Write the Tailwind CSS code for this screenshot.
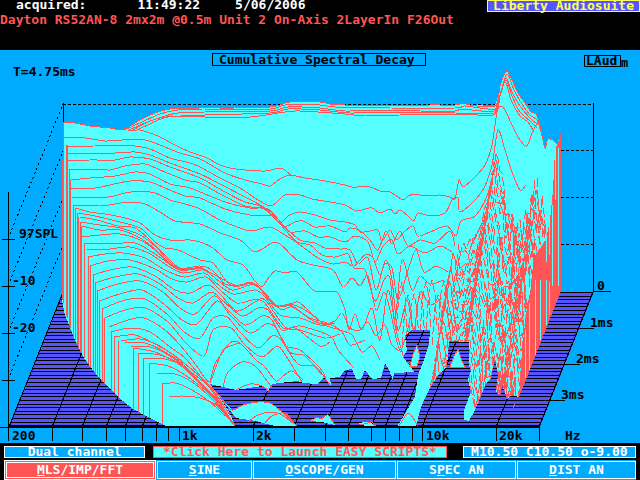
<!DOCTYPE html>
<html lang="en">
<head>
    <meta charset="UTF-8">
    <meta name="viewport" content="width=device-width, initial-scale=1.0">
    <title>Liberty Audiosuite - Cumulative Spectral Decay</title>
    <script src="https://cdn.jsdelivr.net/npm/@tailwindcss/browser@4"></script>
</head>
<body class="bg-black text-white font-['DejaVu_Sans_Mono',monospace] font-bold text-[13px] overflow-x-hidden">

    <header class="pb-[22px]">
        <div class="flex items-start justify-between">
            <div class="flex gap-[35px] pl-4 leading-[10px] whitespace-nowrap">
                <span class="pr-4">acquired:</span>
                <span>11:49:22</span>
                <span>5/06/2006</span>
            </div>
            <h1 class="border border-[#ffff55] bg-[#5555ff] text-[#ffff55] px-[5px] h-3 leading-[10px]">Liberty Audiosuite</h1>
        </div>
        <p class="text-[#ff5555] leading-4 whitespace-nowrap">Dayton RS52AN-8 2mx2m @0.5m Unit 2 On-Axis 2LayerIn F26Out</p>
    </header>

    <main>
        <svg class="block w-full bg-[#00aaff]" viewBox="0 50 640 393" shape-rendering="crispEdges" fill="none">
            <defs>
                <clipPath id="bodyClip"><use href="#body"/></clipPath>
            </defs>

            <!-- floor -->
            <polygon points="9,427 62,293 594,292 540,427" fill="#5555ff"/>
            <g id="floor" stroke="#000"></g>

            <!-- back walls -->
            <g stroke="#000">
                <path d="M63 103V160M593 103V292L539 427M8 192V441M0 427H540"/>
                <path d="M2 239H15M2 286H15M2 333H15M2 380H15"/>
                <path d="M593 291H611M578 328H594M563 364H580M549 400H565"/>
                <path stroke-dasharray="2 3" d="M8 239L63 104M8 286L63 151M8 333L63 198M8 380L63 245"/>
                <path stroke-dasharray="3 2" d="M63 104H593M561 150H593M561 197H593M561 244H593"/>
            </g>

            <!-- decay surface -->
            <path id="body" fill="#55ffff" d="M63 122L75 123L90 126L110 128L120 130L127 128L140 120L155 113L170 109L200 108L270 107L283 104L290 102H320L330 104L345 105L390 106L455 105L463 103L470 105L495 106L498 96L500 86L504 75L507 71L512 80L518 93L525 103L531 112L536 114L540 126L545 148L547 139L553 140L557 144L561 134V291L519 397L512 395L507 399L505 392L502 385L500 396L496 392L498 375L495 358L491 378L486 383L480 398L475 410L469 421L464 420L464 410L471 392L468 380L471 370L469 366V342L449 341L447 366L438 375L430 388L424 400L420 410L416 427L397 427L406 412L415 397L418 375L424 360L429 345L430 330L412 330L405 336L407 350L403 357L410 366L414 372L394 373L393 380L389 370L385 363L381 378L372 379L365 370L361 379H356L352 369L345 370L340 377L330 378L331 386L325 377L317 384L303 383L297 381L272 384L268 391L262 386L236 390L223 387L210 384L220 398L228 410L236 427H168L150 418L133 409L118 397L105 384L95 373L84 358L75 340L65 315L62 300Z"/>
            <path fill="#55ffff" d="M222 400L232 410L243 405L258 402L270 403L282 412L298 427L280 426L265 424L256 421L236 418Z M310 421L316 417L320 419L328 415L335 425L322 422Z M358 424L363 422L370 422L376 428L366 426Z M270 427L283 421L295 424L300 428Z"/>
            <!-- small peaks standing in the gaps -->
            <path fill="#55ffff" stroke="#ff5555" d="M410 366L413 354L417 345L420 357L417 366Z M450 367L454 356L458 349L462 361L465 367Z"/>

            <g id="noise" stroke="#ff5555" clip-path="url(#bodyClip)"></g>
            <g id="curves" stroke="#ff5555"></g>
            <g id="drops" stroke="#ff5555"></g>

            <!-- right edge where the slices stack up -->
            <path fill="#ff5555" d="M561 134V291L519 397L522 350L527 307L532 283L533 258L546 240L550 220L553 190L555 150Z"/>
            <path stroke="#55ffff" d="M558 148V286M555 146V200M552 205V286M549 215V255M549 282V315M546 235V262M546 280V325M540 280V340M535 280V355M529 303V370M525 330V378"/>
            <path stroke="#ff5555" d="M515 403L513 408"/>

            <!-- frequency ticks -->
            <path id="ticks" stroke="#000"></path>
            <path stroke="#000" stroke-width="2" d="M8 427H540"/>

            <!-- labels -->
            <rect x="212" y="53" width="213" height="12" stroke="#000"/>
            <rect x="584" y="55" width="36" height="11" stroke="#000"/>
            <g fill="#000" class="text-[13px]">
                <text x="219" y="64">Cumulative Spectral Decay</text>
                <text x="586" y="65">LAud</text>
                <text x="621" y="67" class="text-[12px]">m</text>
                <text x="13" y="76">T=4.75ms</text>
                <text x="19" y="238">97SPL</text>
                <text x="12" y="285">-10</text>
                <text x="12" y="332">-20</text>
                <text x="597" y="290">0</text>
                <text x="590" y="327">1ms</text>
                <text x="576" y="363">2ms</text>
                <text x="561" y="399">3ms</text>
                <text x="12" y="440">200</text>
                <text x="182" y="440">1k</text>
                <text x="256" y="440">2k</text>
                <text x="426" y="440">10k</text>
                <text x="499" y="440">20k</text>
                <text x="565" y="440">Hz</text>
            </g>
        </svg>
    </main>

    <footer class="px-1 pt-[3px] whitespace-nowrap text-center">
        <div class="grid grid-cols-[141fr_293fr_181fr] gap-x-2">
            <div class="bg-[#00aaff] border border-white h-3 leading-[10px]">Dual channel</div>
            <button type="button" class="bg-[#55ffff] border border-[#ff5555] text-[#ff5555] h-3 leading-[10px]">*Click Here to Launch EASY SCRIPTS*</button>
            <div class="bg-[#00aaff] border border-white h-3 leading-[10px] ml-2">M10.50 C10.50 o-9.00</div>
        </div>
        <nav class="grid grid-cols-[152fr_95fr_143fr_119fr_119fr] gap-x-px mt-[2px] bg-[#00aaff]">
            <button type="button" class="bg-[#ff5555] border border-white p-px h-5"><span class="block border border-white h-4 leading-[14px]"><u>M</u>LS/IMP/FFT</span></button>
            <button type="button" class="border border-white h-[18px] mt-px leading-4"><u>S</u>INE</button>
            <button type="button" class="border border-white h-[18px] mt-px leading-4"><u>O</u>SCOPE/GEN</button>
            <button type="button" class="border border-white h-[18px] mt-px leading-4">S<u>P</u>EC AN</button>
            <button type="button" class="border border-white h-[18px] mt-px leading-4"><u>D</u>IST AN</button>
        </nav>
    </footer>

    <script>
        // every slice is a flat list x,y,x,y...
        const slices = [
            '64,122 75,123 90,126 110,128 120,130 127,128 140,120 155,113 170,109 200,108 235,108 270,107 283,104 290,102 320,102 330,104 345,105 390,106 430,105 455,105 463,103 470,105 495,106 500,86 504,75 507,71 512,80 518,93 525,103 531,112 536,114 540,126 545,148 548,138 553,140 558,144 561,134',
            '124,130 142,122 160,114 178,110 205,110 270,109 285,105 320,105 335,107 390,108 455,108 465,106 495,109 500,95 507,74 514,90 522,104 530,115 537,120 541,132',
            '129,130 145,123 162,117 178,113 205,112 270,111 288,107 320,108 345,111 390,110 420,111 455,111 462,109 494,111 500,95 506,78 512,92 520,106 530,118 537,124',
            '133,130 150,121 166,117 205,115 270,113 288,109 320,110 350,113 390,112 455,113 494,113 500,96 506,80 512,96 520,112 530,121 537,128',
            '137,130 150,124 168,117 205,117 250,117 285,112 300,111 345,114 365,116 400,115 455,114 493,115 497,105 505,82 511,100 520,116 528,122 534,132',
            '128,131 140,130 150,133 160,137 175,145 190,152 205,157 220,165 230,168 245,170 265,171 280,168 286,171 292,176',
            '64,137 85,138 105,141 122,140 145,140 160,145 180,153 200,159 225,173 245,180 262,184 270,186 280,179 290,175 305,178 325,181 345,185 352,187 370,187 380,191 390,192 403,200 408,196 415,194 425,196 440,195 450,197 455,199 459,180 463,187 475,177 485,165 492,145 497,112 501,106 505,110 512,125 520,140 527,146 532,133 538,122',
            '67,146 95,146 115,145 135,146 150,149 170,158 190,163 200,167 220,178 240,188 258,200 270,206 277,202 285,195 300,195 312,199 330,202 345,205 356,211 365,209 372,208 380,213 390,209 395,214 400,210 408,216 414,221 418,213 430,216 445,213 452,200 458,198 460,212 475,200 484,188 492,165 498,130 505,150 512,172 520,190 526,185',
            '67,153 95,154 115,153 135,152 150,155 170,163 200,174 220,184 245,197 262,206 272,213 280,223 288,216 300,212 315,215 330,220 345,222 355,225 360,232 370,231 378,230 382,241 390,230 396,240 405,231 413,226 418,236 430,232 447,226 456,236 461,221 475,216 487,196 497,160',
            '67,161 90,160 115,160 130,157 150,159 170,167 200,178 225,192 245,202 262,207 283,226 295,222 303,221 315,227 330,226 345,232 350,228 360,231 370,240 378,250 386,231 392,244 400,231 408,246 420,240 435,243 450,231 455,246',
            '69,170 95,169 110,170 125,166 145,164 160,170 185,180 200,183 222,195 245,206 265,209 280,223 290,232 305,231 318,237 330,237 345,242 355,236 368,242 375,262 383,246 392,240 398,254 410,246 425,253 440,246 452,252',
            '71,180 90,178 115,176 135,172 150,174 170,184 190,188 225,202 250,208 268,209 285,227 300,240 315,243 325,248 340,249 350,250 358,264 368,258 376,290 384,265 392,268 398,300 408,270 416,250 424,272 436,266 448,272',
            '71,189 95,188 110,185 130,181 150,182 165,188 185,196 200,198 225,209 250,215 272,216 285,230 297,242 310,245 322,255 335,257 348,254 354,268 365,270 375,301 384,280 390,278 395,320 402,260 412,290 420,276 430,284 444,280',
            '72,197 108,197 125,193 140,191 155,193 170,200 185,204 200,209 220,220 240,228 252,231 270,227 285,235 300,245 318,258 333,264 345,262 354,266 365,255 373,258 380,275 386,260 392,280 398,330 407,300 414,330 420,292 430,305 442,298',
            '73,205 100,206 115,204 130,202 145,204 160,212 175,221 200,224 220,233 240,240 255,252 272,243 280,244 297,260 313,265 333,270 343,287 352,278 360,286 368,276 376,310 384,292 390,310 400,350 410,320',
            '75,208 90,212 105,214 125,218 140,223 155,235 170,240 190,240 200,242 213,248 227,260 243,265 255,281 262,287 267,280 275,271 285,273 297,272 313,290 325,292 337,292 345,310 349,330 355,314 362,330 372,308 380,340 388,290 396,330 404,358',
            '77,213 95,216 120,222 140,228 155,242 165,248 178,250 200,260 213,263 227,282 237,287 250,282 260,288 275,305 287,305 298,302 310,312 323,323 335,321 342,313 350,328 360,330 368,322 376,336 385,325 392,345 402,352',
            '80,217 97,220 118,226 135,228 150,240 165,255 180,268 200,266 212,270 225,284 240,286 255,284 275,306 292,306 310,319 330,327 340,330 352,335 362,352 372,346 380,360',
            '80,222 100,225 120,228 140,235 155,246 168,260 180,269 202,267',
            '82,226 100,230 120,230 140,238 155,249 168,262 180,270 202,268',
            '82,237 100,235 120,234 140,240 155,250 168,263 180,270 202,268',
            '84,243 110,244 135,243 155,254 180,270 200,268 213,274 235,285 250,283 262,290 277,306 290,304 305,310 325,325',
            '87,250 110,249 130,247 150,254 168,266 183,273 203,270 215,278 232,290 250,285 260,288 280,309 292,307 310,318 330,324 342,332 350,345 365,340',
            '88,257 105,254 123,253 145,258 165,270 184,277 204,273 215,282 233,294 255,290 265,297 280,315 300,318 320,325 335,323',
            '90,266 108,261 130,260 155,269 172,279 187,282 206,277 220,290 237,303 252,300 264,302 283,328 300,326 330,336 338,350 354,368',
            '93,275 110,270 132,267 155,276 175,290 190,293 208,285 220,294 237,311 255,302 265,300 285,327 300,330 325,338 340,334',
            '95,283 115,277 138,274 160,284 178,298 193,303 211,292 222,300 242,316 258,308 268,310 282,330 295,328 320,346 330,342',
            '97,291 118,284 140,281 163,292 180,308 195,314 214,296 226,308 245,325 262,316 272,320 285,345 300,350 320,368 326,378',
            '99,301 120,294 142,290 165,305 182,320 197,324 217,301 230,315 250,333 266,324 276,328 290,352 305,356 322,375',
            '102,309 125,300 145,299 168,315 184,332 200,338 213,318 227,317 240,332 258,348 272,336 281,340 298,364 315,366 330,385',
            '105,318 125,310 145,308 168,322 186,343 204,356 213,330 231,328 245,345 262,357 277,346 286,356 302,382',
            '109,327 128,320 144,318 165,330 180,345 196,365 209,382 215,364 230,343 240,343 256,360 264,366 276,381 283,376 292,371 303,380',
            '111,332 130,328 150,332 170,347 185,358 205,382 218,398',
            '114,337 135,335 155,344 175,356 190,368 208,384 225,402',
            '121,341 140,339 160,346 180,360 195,372 208,384 220,400 230,415',
            '125,343 145,343 165,352 185,366 203,386 218,400',
            '130,346 150,347 170,356 190,372 206,390 222,404',
            '133,348 155,352 175,362 195,375 210,388 227,414',
            '138,353 160,355 180,364 198,380 215,398 231,420',
            '143,358 165,359 182,366 200,384 215,400 230,420',
            '149,363 168,366 185,375 205,390 218,402 234,424',
            '156,373 175,374 192,382 208,395 222,410 236,427',
            '162,384 175,383 190,389 210,402 225,416',
            '169,397 182,396 200,398 216,405 235,426',
            '210,383 222,352 230,346 240,343', '223,387 228,372 242,362 255,366 265,378 272,388',
            '236,390 250,384 262,386 269,391',
            '222,400 232,410 243,405 258,402 270,403 282,412 298,427',
            '248,422 258,415 272,412 282,415 294,424', '264,424 272,416 285,413 293,422',
            '312,421 317,417 321,419 328,415 334,424', '360,425 368,423 372,422 376,427',
            '399,426 408,413 415,421 418,427'
        ];

        // smooth line through the points
        function toPath(text) {
            const p = text.split(' ').map(s => s.split(',').map(Number));
            let d = `M${p[0]}`;
            for (let i = 0; i < p.length - 1; i++) {
                const a = p[i - 1] || p[i], b = p[i], c = p[i + 1], e = p[i + 2] || c;
                d += `C${b[0] + (c[0] - a[0]) / 7},${b[1] + (c[1] - a[1]) / 7} ${c[0] - (e[0] - b[0]) / 7},${c[1] - (e[1] - b[1]) / 7} ${c}`;
            }
            return `<path d="${d}"/>`;
        }
        document.getElementById('curves').innerHTML = slices.map(toPath).join('');

        // left ends of the slices dropping to the floor: x, top, bottom
        const drops = [[62,160,300],[63,122,303],[66,145,316],[67,145,318],[69,170,326],[70,180,328],[73,205,338],[75,208,340],[77,213,346],[78,217,348],[80,222,352],[81,226,353],[84,243,358],[88,257,364],[90,266,367],[93,275,371],[95,283,374],[97,291,376],[99,301,378],[102,309,382],[104,318,384],[111,332,390],[114,337,393],[118,341,397],[133,348,409],[138,353,412],[143,358,415],[149,363,418],[162,384,424]];
        document.getElementById('drops').innerHTML = drops.map(([x, a, b]) => `<path d="M${x} ${a}V${b}"/>`).join('');

        // floor grid
        const ticks = [52, 82, 106, 125, 142, 156, 168, 179, 253, 294, 325, 348, 371, 385, 399, 412, 422, 496];
        let grid = '';
        for (let i = 0; i < 38; i++) {
            const y = Math.round(292 + i * 3.6);
            const shift = (427 - y) * 0.4;
            grid += `<path d="M${9 + shift} ${y}H${539 + shift}"/>`;
        }
        ticks.forEach(x => grid += `<path d="M${x} 427L${x + 54} 292"/>`);
        grid += '<path d="M9 427L62 295"/>';
        document.getElementById('floor').innerHTML = grid;
        document.getElementById('ticks').setAttribute('d', [...ticks, 539].map(x => `M${x} 427V441`).join(''));

        // high frequency ripple, repeatable
        let seed = 7;
        const rnd = () => (seed = (seed * 16807) % 2147483647) / 2147483647;
        const bump = (x, c, w) => Math.exp(-Math.abs(x - c) / w);
        let ripple = '';
        for (let k = 0; k < 30; k++) {
            const cx = 497 - k * 1.1, base = 258 + k * 7;
            let d = '';
            for (let x = 458 - k; x < 551 - k * 0.8; x += 2) {
                const y = base - 112 * bump(x, cx, 14) - 72 * bump(x, cx + 40, 8) + (rnd() - 0.5) * (x > cx + 8 ? 44 : 14);
                d += `${d ? 'L' : 'M'}${x} ${Math.round(y)}`;
            }
            ripple += `<path stroke-dasharray="9 3" d="${d}"/>`;
        }
        // narrow ridges around 8k-10k
        for (let k = 0; k < 14; k++) {
            const cx = 453 - k * 2, y0 = 246 + k * 13;
            let d = `M${cx - 9} ${y0 + 50}`;
            for (let i = -6; i <= 8; i += 2) d += `L${cx + i} ${Math.round(y0 + Math.abs(i) * 6 + rnd() * 12)}`;
            ripple += `<path d="${d}"/>`;
        }
        for (let k = 0; k < 8; k++) {
            const x = 402 + k * 6, y = 270 + Math.round(rnd() * 30);
            ripple += `<path stroke-dasharray="8 3" d="M${x - 6} ${y + 50}L${x - 3} ${y + 12}L${x} ${y}L${x + 3} ${y + 15}L${x + 5} ${y + 48}"/>`;
        }
        document.getElementById('noise').innerHTML = ripple;
    </script>
</body>
</html>
